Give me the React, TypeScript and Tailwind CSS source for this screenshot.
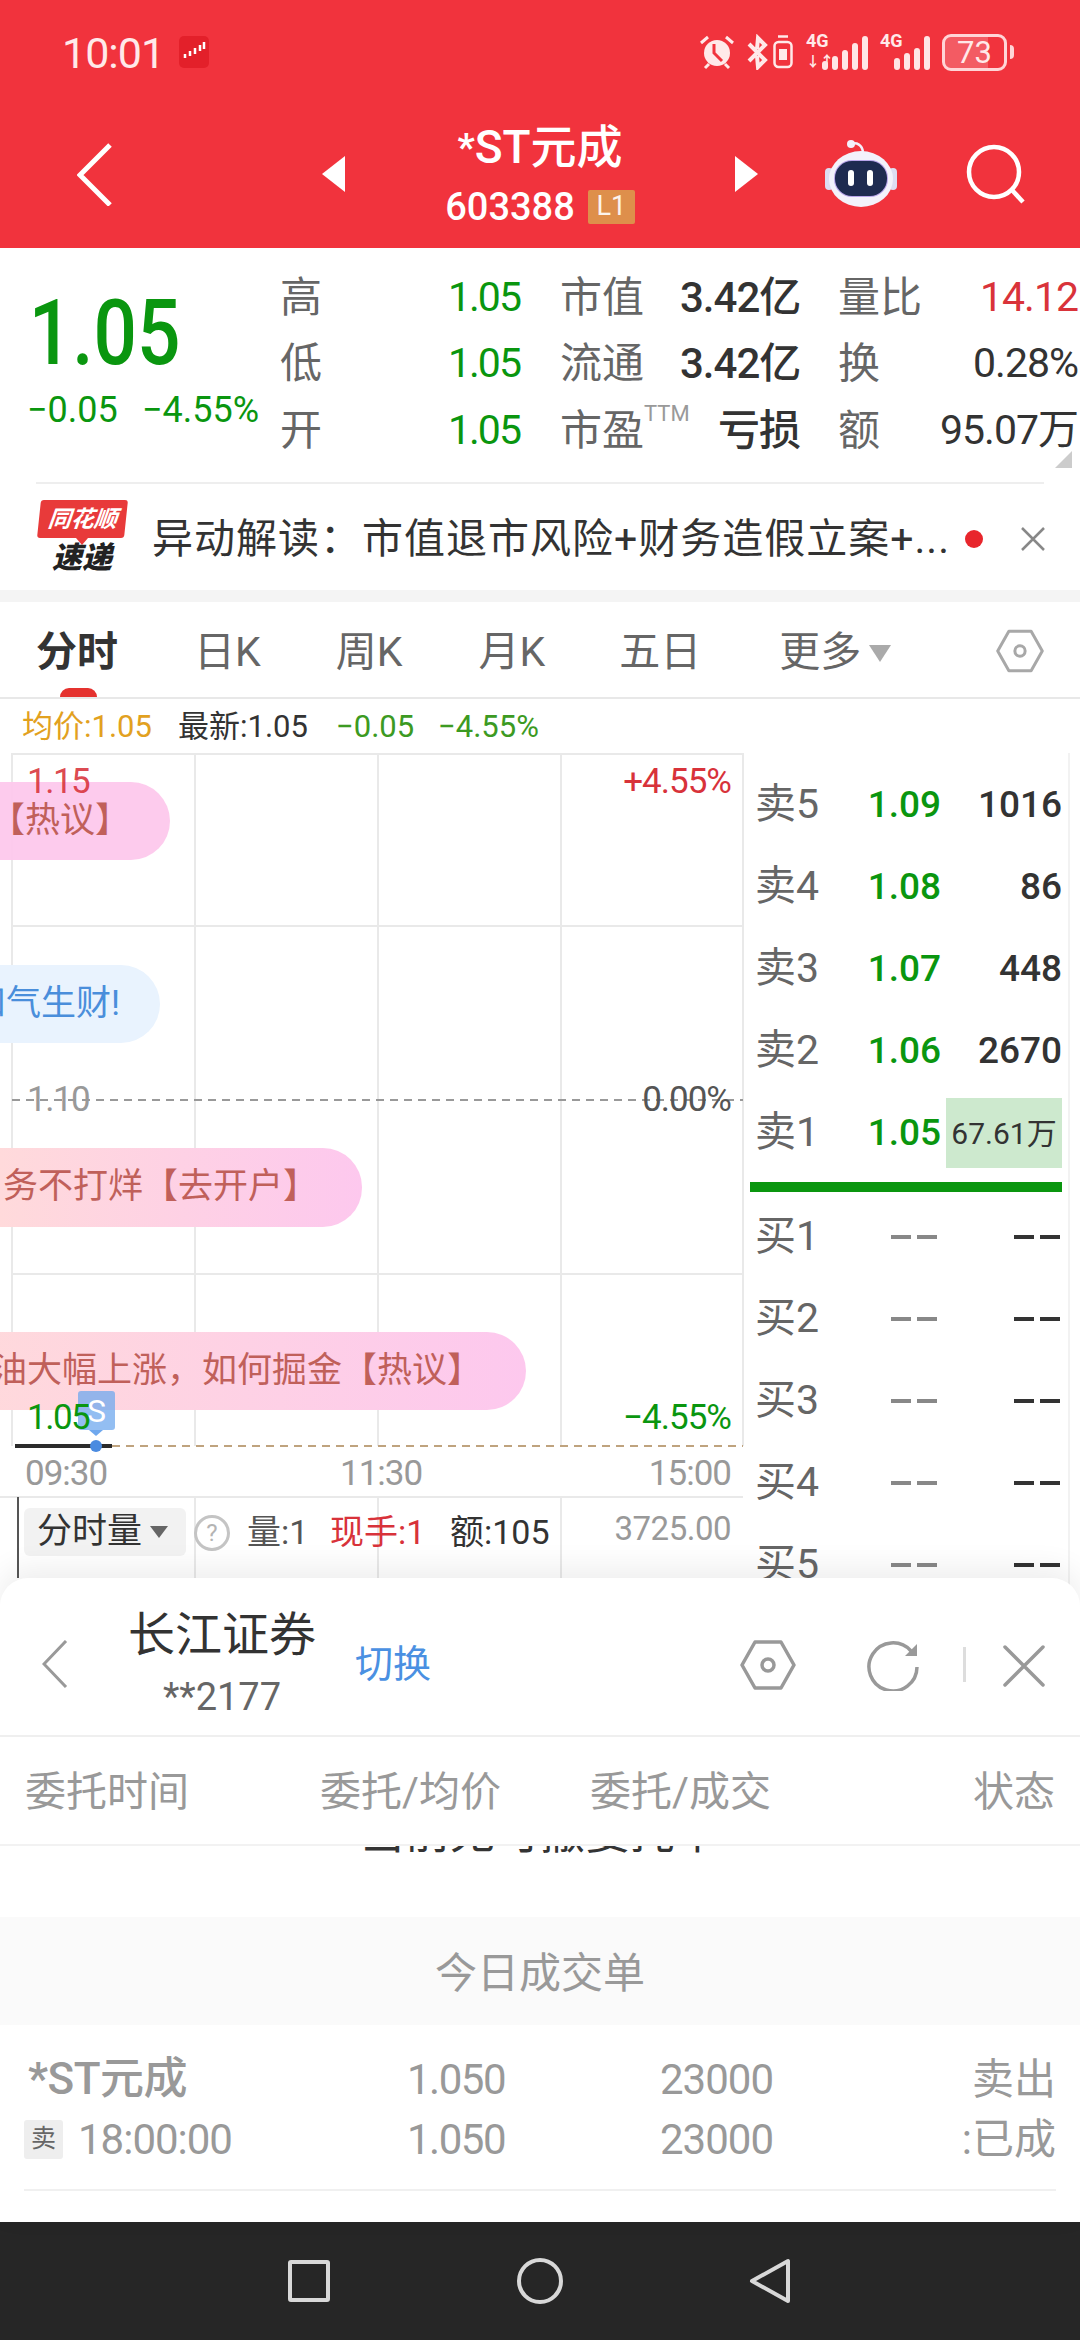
import React from 'react';

const FONT = 'Roboto, "Noto Sans CJK SC", sans-serif';

const quoteRows = [
  { a: '高', b: '1.05', c: '市值', d: '3.42亿', e: '量比', f: '14.12', red: true },
  { a: '低', b: '1.05', c: '流通', d: '3.42亿', e: '换', f: '0.28%' },
  { a: '开', b: '1.05', c: '市盈', d: '亏损', e: '额', f: '95.07万', ttm: true },
];

const sells = [
  { label: '卖5', price: '1.09', qty: '1016' },
  { label: '卖4', price: '1.08', qty: '86' },
  { label: '卖3', price: '1.07', qty: '448' },
  { label: '卖2', price: '1.06', qty: '2670' },
];

const buys = ['买1', '买2', '买3', '买4', '买5'];

function Bars({ heights }: { heights: number[] }) {
  return (
    <div className="flex items-end gap-[4px] h-[34px]">
      {heights.map((h, i) => (
        <div key={i} className="w-[6px] rounded-[3px] bg-[#FFE6E6]" style={{ height: h }} />
      ))}
    </div>
  );
}

function HexIcon({ width, height, color, stroke }: { width: number; height: number; color: string; stroke: number }) {
  return (
    <svg width={width} height={height} viewBox="0 0 56 50" fill="none" stroke={color} strokeWidth={stroke}>
      <path d="M15 2h26l13 23-13 23H15L2 25z" strokeLinejoin="round" />
      <circle cx="28" cy="25" r="6" />
    </svg>
  );
}

function StatusBar() {
  return (
    <div className="h-[100px] flex items-start pt-[32px] pl-[62px] text-[#FFE9E9]">
      <span className="text-[43px] leading-[42px] w-[100px] tracking-[-1px]">10:01</span>
      {/* app thumbnail */}
      <svg width="30" height="32" viewBox="0 0 30 32" className="ml-[17px] mt-[4px]">
        <rect width="30" height="32" rx="5" fill="#E3202A" />
        <path d="M6 22v-4M11 20v-5M16 18v-6M21 15v-6M25 13V6" stroke="#fff" strokeWidth="2.5" />
      </svg>
      <div className="ml-[490px] flex items-center h-[40px]">
        {/* alarm */}
        <svg width="36" height="36" viewBox="0 0 36 36" fill="#FFE9E9">
          <circle cx="18" cy="19" r="13" />
          <path d="M2 9l7-6M34 9l-7-6M6 34l4-4M30 34l-4-4" stroke="#FFE9E9" strokeWidth="3" />
          <path d="M15 10v9l8 8" stroke="#F1333D" strokeWidth="3" fill="none" />
        </svg>
        {/* bluetooth vibrate */}
        <svg width="21" height="36" viewBox="0 0 21 36" fill="none" stroke="#FFE9E9" strokeWidth="4" className="ml-[12px]">
          <path d="M2 10l16 16-7 7-1-11M2 27L18 11l-7-7-1 11" />
        </svg>
        <svg width="20" height="34" viewBox="0 0 20 34" className="ml-[5px]">
          <path d="M5 1.5h10" stroke="#FFE9E9" strokeWidth="2.5" />
          <rect x="1.5" y="7" width="17" height="25" rx="4" fill="none" stroke="#FFE9E9" strokeWidth="2.5" />
          <rect x="6" y="14" width="8" height="11" fill="#FFE9E9" />
        </svg>
        <div className="relative ml-[13px] w-[62px] h-[36px]">
          <span className="absolute left-0 -top-[2px] text-[18px] leading-[18px] font-bold">4G</span>
          <span className="absolute left-[0px] top-[20px] text-[14px] leading-[14px] font-bold">↓↑</span>
          <div className="absolute right-0 bottom-0">
            <Bars heights={[9, 14, 20, 27, 34]} />
          </div>
        </div>
        <div className="relative ml-[12px] w-[50px] h-[36px]">
          <span className="absolute left-0 -top-[2px] text-[18px] leading-[18px] font-bold">4G</span>
          <div className="absolute right-0 bottom-0">
            <Bars heights={[12, 17, 22, 34]} />
          </div>
        </div>
        <div className="relative ml-[12px] w-[65px] h-[37px] rounded-[9px] border-[3px] border-[#FFD5D7] overflow-hidden flex items-center justify-center text-[31px] leading-none">
          <div className="absolute left-0 top-0 bottom-0 w-[73%] bg-white/20" />
          <span className="relative">73</span>
        </div>
        <div className="ml-[3px] w-[4px] h-[14px] rounded-r bg-[#FFD5D7]" />
      </div>
    </div>
  );
}

function Header() {
  return (
    <div className="h-[148px] flex items-center text-white">
      <svg width="35" height="63" viewBox="0 0 35 63" fill="none" stroke="#fff" strokeWidth="5" className="ml-[77px]">
        <path d="M33 2L3 32l30 30" />
      </svg>
      <div className="ml-[210px] w-0 h-0 border-y-[18px] border-y-transparent border-r-[23px] border-r-white" />
      <div className="w-[390px] flex flex-col items-center">
        <div className="text-[46px] leading-[50px] font-medium -mt-[2px]">
          <span className="text-[38px] align-[2px] font-bold">*</span>ST元成
        </div>
        <div className="mt-[16px] flex items-center h-[36px]">
          <span className="text-[38px] leading-[36px] font-medium">603388</span>
          <span className="ml-[13px] w-[47px] h-[34px] rounded-[2px] bg-[#DE8F4B] flex items-center justify-center text-[27px] text-white/90">
            L1
          </span>
        </div>
      </div>
      <div className="w-0 h-0 border-y-[18px] border-y-transparent border-l-[23px] border-l-white" />
      {/* robot */}
      <svg width="72" height="68" viewBox="0 0 72 68" className="ml-[67px]">
        <path d="M26 4c6-2 11 1 12 8" stroke="#F4F0FB" strokeWidth="2.5" fill="none" />
        <circle cx="26" cy="4" r="4" fill="#F4F0FB" />
        <rect x="0" y="28" width="8" height="22" rx="4" fill="#DDDDF2" />
        <rect x="64" y="28" width="8" height="22" rx="4" fill="#DDDDF2" />
        <ellipse cx="36" cy="39" rx="32" ry="28" fill="#F3F2FB" />
        <rect x="9" y="20" width="54" height="37" rx="18" fill="#B9A5EA" />
        <rect x="10" y="21" width="52" height="35" rx="17" fill="#1E2B50" />
        <rect x="23" y="30" width="6" height="16" rx="3" fill="#fff" />
        <rect x="42" y="30" width="6" height="16" rx="3" fill="#fff" />
      </svg>
      <svg width="60" height="60" viewBox="0 0 60 60" fill="none" stroke="#fff" strokeWidth="4.5" className="ml-[69px]">
        <circle cx="28" cy="28" r="25" />
        <path d="M46 46l11 12" />
      </svg>
    </div>
  );
}

function Quote() {
  return (
    <div className="relative h-[234px] flex bg-white">
      <div className="w-[280px] shrink-0 pl-[27px]">
        <div className="mt-[41px] text-[90px] leading-[90px] font-medium text-[#0A960F] pl-[2px] origin-left scale-x-[0.85]">1.05</div>
        <div className="mt-[11px] flex text-[36px] leading-[40px] text-[#0A960F]">
          <span className="w-[115px]">−0.05</span>
          <span>−4.55%</span>
        </div>
      </div>
      <div className="flex-1 pt-[16px] pr-[2px]">
        {quoteRows.map((r) => (
          <div key={r.a} className="h-[66.5px] flex items-center">
            <span className="w-[168px] text-[42px] text-[#666]">{r.a}</span>
            <span className="w-[112px] text-[41px] text-[#0A960F] tracking-[-2px]">{r.b}</span>
            <span className="w-[120px] text-[42px] text-[#666] flex items-start whitespace-nowrap">
              {r.c}
              {r.ttm && <span className="text-[22px] leading-[30px] text-[#999]">TTM</span>}
            </span>
            <span className="w-[120px] text-right text-[42px] text-[#333] whitespace-nowrap tracking-[-1px] font-medium">{r.d}</span>
            <div className="flex-1 pl-[38px] flex justify-between items-center">
              <span className="text-[42px] text-[#666]">{r.e}</span>
              <span className={`text-[41px] tracking-[-1px] ${r.red ? 'text-[#D9333A]' : 'text-[#333]'}`}>{r.f}</span>
            </div>
          </div>
        ))}
      </div>
      <div className="absolute right-[8px] bottom-[14px] w-0 h-0 border-b-[17px] border-b-[#CCCCCC] border-l-[17px] border-l-transparent" />
    </div>
  );
}

function News() {
  return (
    <div className="h-[108px] mx-[36px] border-t-2 border-[#EEEEEE] flex items-start pt-[16px]">
      <div className="w-[88px] ml-[2px] flex flex-col items-center shrink-0">
        <div className="w-[87px] h-[38px] bg-[#E83A3A] rounded-[3px] -skew-x-6 flex items-center justify-center text-[23px] leading-none italic font-bold text-white whitespace-nowrap">
          同花顺
        </div>
        <div className="w-0 h-0 border-x-[6px] border-x-transparent border-t-[7px] border-t-[#E83A3A]" />
        <div className="text-[30px] leading-[30px] italic font-black text-[#222] -mt-[2px]">速递</div>
      </div>
      <div className="ml-[26px] w-[813px] shrink-0 mt-[14px] text-[41px] leading-[50px] text-[#333] tracking-[1px] whitespace-nowrap overflow-hidden">
        {'异动解读\uFF1A市值退市风险+财务造假立案+...'}
      </div>
      <div className="mt-[30px] w-[18px] h-[18px] rounded-full bg-[#E8262C] shrink-0" />
      <svg width="26" height="26" viewBox="0 0 26 26" stroke="#888" strokeWidth="2.5" className="ml-[37px] mt-[26px] shrink-0">
        <path d="M2 2l22 22M24 2L2 24" />
      </svg>
    </div>
  );
}

function Tabs() {
  return (
    <div className="relative h-[97px] border-b-2 border-[#E8E8E8] bg-white flex items-center pt-[6px] text-[41px] text-[#666]">
      <div className="absolute left-[60px] bottom-0 w-[37px] h-[9px] rounded-t-full rounded-b-[2px] bg-[#E5322F]" />
      <span className="ml-[36px] font-bold text-[#333]">分时</span>
      <span className="ml-[76px]">日K</span>
      <span className="ml-[75px]">周K</span>
      <span className="ml-[76px]">月K</span>
      <span className="ml-[74px]">五日</span>
      <span className="ml-[78px]">更多</span>
      <div className="ml-[8px] mt-[2px] w-0 h-0 border-x-[11px] border-x-transparent border-t-[17px] border-t-[#AAAAAA]" />
      <div className="absolute left-[996px] top-[26px]">
        <HexIcon width={48} height={46} color="#A8A8A8" stroke={3.5} />
      </div>
    </div>
  );
}

function Legend() {
  return (
    <div className="h-[54px] flex items-center pl-[22px] pt-[2px] text-[31px] whitespace-nowrap bg-white">
      <span className="text-[#E2A11F] w-[156px]">均价:1.05</span>
      <span className="text-[#333] w-[158px]">最新:1.05</span>
      <span className="text-[#3C9A22] w-[102px]">−0.05</span>
      <span className="text-[#3C9A22]">−4.55%</span>
    </div>
  );
}

function Chart() {
  return (
    <div className="relative w-[745px] h-[849px] shrink-0 overflow-hidden">
      {/* chart grid */}
      <svg width="745" height="849" className="absolute left-0 top-0" fill="none">
        <g stroke="#E9E9E9" strokeWidth="2">
          <path d="M12 1H743M12 173H743M12 521H743M0 744H743" />
          <path d="M12 0V693M195 0V693M378 0V693M561 0V693M743 0V693" />
          <path d="M195 744V849M378 744V849M561 744V849" />
        </g>
        <path d="M12 347H743" stroke="#999" strokeWidth="2" strokeDasharray="8 6" />
        <path d="M112 693H743" stroke="#BFA37E" strokeWidth="2" strokeDasharray="8 6" />
        <path d="M15 693H112" stroke="#2B2B2B" strokeWidth="4" />
        <path d="M18 744V825" stroke="#555" strokeWidth="2" />
      </svg>

      <div className="absolute -left-[40px] top-[29px] w-[210px] h-[78px] rounded-r-[39px] bg-[#FDC8EC]/95 flex items-center justify-end pr-[40px] text-[35px] text-[#C0605A] whitespace-nowrap">
        【热议】
      </div>
      <div className="absolute -left-[40px] top-[212px] w-[200px] h-[78px] rounded-r-[39px] bg-[#E9F3FE] flex items-center justify-end pr-[40px] text-[35px] text-[#4A8EDB] whitespace-nowrap">
        和气生财!
      </div>
      <div className="absolute left-0 top-[395px] w-[362px] h-[79px] rounded-r-[39px] bg-linear-to-r from-[#FFDADB] to-[#FDC8EE] flex items-center justify-end pr-[44px] text-[35px] text-[#C0605A] whitespace-nowrap">
        务不打烊【去开户】
      </div>
      <div className="absolute -left-[40px] top-[579px] w-[566px] h-[78px] rounded-r-[39px] bg-linear-to-r from-[#FFDADB] to-[#FDC8EE] flex items-center justify-end pr-[44px] text-[35px] text-[#C0605A] whitespace-nowrap">
        {'石油大幅上涨\uFF0C如何掘金【热议】'}
      </div>

      {/* S marker */}
      <div className="absolute left-[78px] top-[638px] w-[37px] h-[39px] rounded-[3px] bg-[#6FA8EE]/75 flex items-center justify-center text-[32px] leading-none text-white">
        S
      </div>
      <div className="absolute left-[89px] top-[677px] w-0 h-0 border-x-[7px] border-x-transparent border-t-[6px] border-t-[#6FA8EE]" />
      <div className="absolute left-[90px] top-[687px] w-[12px] h-[12px] rounded-full bg-[#4A8BE0]" />

      <span className="absolute left-[27px] top-[11px] text-[35px] leading-[36px] tracking-[-1.5px] text-[#D8323A]/90">1.15</span>
      <span className="absolute right-[14px] top-[11px] text-[35px] leading-[36px] tracking-[-1px] text-[#D8323A]">+4.55%</span>
      <span className="absolute left-[27px] top-[329px] text-[35px] leading-[36px] tracking-[-1.5px] text-[#999]">1.10</span>
      <span className="absolute right-[14px] top-[329px] text-[35px] leading-[36px] tracking-[-1px] text-[#555]">0.00%</span>
      <span className="absolute left-[27px] top-[647px] text-[35px] leading-[36px] tracking-[-1.5px] text-[#0A960F]">1.05</span>
      <span className="absolute right-[14px] top-[647px] text-[35px] leading-[36px] tracking-[-1px] text-[#0A960F]">−4.55%</span>

      <span className="absolute left-[25px] top-[701px] text-[35px] leading-[40px] tracking-[-1px] text-[#999]">09:30</span>
      <span className="absolute left-[340px] top-[701px] text-[35px] leading-[40px] tracking-[-1px] text-[#999]">11:30</span>
      <span className="absolute right-[14px] top-[701px] text-[35px] leading-[40px] tracking-[-1px] text-[#999]">15:00</span>

      {/* volume header */}
      <div className="absolute left-[24px] top-[755px] w-[162px] h-[48px] rounded-[6px] bg-[#F2F2F2] flex items-center pl-[13px] text-[35px] text-[#333] whitespace-nowrap">
        分时量
        <div className="ml-[8px] w-0 h-0 border-x-[9px] border-x-transparent border-t-[12px] border-t-[#666]" />
      </div>
      <div className="absolute left-[194px] top-[762px] w-[36px] h-[36px] rounded-full border-[3px] border-[#C4C4C4] flex items-center justify-center text-[24px] leading-none text-[#B4B4B4]">
        ?
      </div>
      <div className="absolute left-[247px] top-[755px] h-[48px] flex items-center text-[34px] whitespace-nowrap">
        <span className="w-[83px] text-[#555]">量:1</span>
        <span className="w-[120px] text-[#D8323A]">现手:1</span>
        <span className="text-[#333]">额:105</span>
      </div>
      <span className="absolute right-[14px] top-[756px] text-[33px] leading-[40px] tracking-[-0.5px] text-[#999]">3725.00</span>
    </div>
  );
}

function OrderBook() {
  return (
    <div className="flex-1 h-[849px] overflow-hidden pt-[11px] pl-[5px] pr-[6px] mr-[10px] border-r-2 border-[#F2F2F2]">
      {sells.map((s) => (
        <div key={s.label} className="h-[82px] flex items-center pl-[5px]">
          <span className="w-[72px] text-[41px] text-[#666]">{s.label}</span>
          <span className="w-[114px] text-right text-[37px] font-medium text-[#0A960F]">{s.price}</span>
          <span className="flex-1 text-right text-[37px] font-medium text-[#333]">{s.qty}</span>
        </div>
      ))}
      <div className="h-[82px] flex items-center pl-[5px]">
        <span className="w-[72px] text-[41px] text-[#666]">卖1</span>
        <span className="w-[114px] text-right text-[37px] font-medium text-[#0A960F]">1.05</span>
        <span className="ml-[5px] flex-1 h-[70px] bg-[#CDE9CE] flex items-center justify-center text-[30px] text-[#333] whitespace-nowrap">
          67.61万
        </span>
      </div>
      <div className="mt-[8px] h-[10px] bg-[#0A960F]" />
      <div className="pt-[4px]">
        {buys.map((b) => (
          <div key={b} className="h-[82px] flex items-center pl-[5px] pr-[2px]">
            <span className="w-[72px] text-[41px] text-[#666]">{b}</span>
            <span className="w-[114px] flex justify-end gap-[6px] pr-[4px]">
              <span className="w-[20px] h-[4px] bg-[#888]" />
              <span className="w-[20px] h-[4px] bg-[#888]" />
            </span>
            <span className="flex-1 flex justify-end gap-[6px]">
              <span className="w-[20px] h-[4px] bg-[#333]" />
              <span className="w-[20px] h-[4px] bg-[#333]" />
            </span>
          </div>
        ))}
      </div>
    </div>
  );
}

function OrdersSheet() {
  return (
    <div className="relative -mt-[24px] flex-1 bg-white rounded-t-[28px] shadow-[0_-10px_30px_rgba(0,0,0,0.07)] flex flex-col">
      <div className="h-[159px] border-b-2 border-[#EFEFEF] flex items-center">
        <svg width="26" height="48" viewBox="0 0 26 48" fill="none" stroke="#999" strokeWidth="3" className="ml-[42px] mt-[14px]">
          <path d="M24 1L2 24l22 23" />
        </svg>
        <div className="ml-[59px] w-[190px] flex flex-col items-center mt-[10px]">
          <span className="text-[47px] leading-[56px] text-[#333] whitespace-nowrap">长江证券</span>
          <span className="mt-[14px] text-[38px] leading-[40px] text-[#666]">**2177</span>
        </div>
        <span className="ml-[38px] mt-[14px] text-[38px] leading-[50px] text-[#4A90E2]">切换</span>
        <div className="absolute left-[740px] top-[62px]">
          <HexIcon width={56} height={50} color="#999" stroke={3.5} />
        </div>
        <svg width="52" height="52" viewBox="0 0 52 52" fill="none" stroke="#999" strokeWidth="3.5" className="absolute left-[867px] top-[61px]">
          <path d="M44 12A24 24 0 1 0 50 28" />
          <path d="M50 5v12H38z" fill="#999" stroke="none" />
        </svg>
        <div className="absolute left-[963px] top-[69px] w-[3px] h-[35px] bg-[#DDDDDD]" />
        <svg width="42" height="42" viewBox="0 0 42 42" stroke="#999" strokeWidth="3.5" strokeLinecap="round" className="absolute left-[1003px] top-[67px]">
          <path d="M2 2l38 38M40 2L2 40" />
        </svg>
      </div>
      <div className="h-[109px] border-b-2 border-[#F2F2F2] flex items-center pt-[4px] text-[41px] text-[#999] whitespace-nowrap">
        <span className="ml-[25px] w-[295px]">委托时间</span>
        <span className="w-[270px]">委托/均价</span>
        <span className="w-[383px]">委托/成交</span>
        <span>状态</span>
      </div>
      {/* list scrolled under the header: only the bottom of the line shows */}
      <div className="h-[71px] overflow-hidden text-center">
        <div className="-mt-[35px] text-[45px] leading-[45px] text-[#333]">当前无可撤委托单</div>
      </div>
      <div className="h-[108px] bg-[#FAFAFA] flex items-center justify-center pt-[4px] text-[42px] text-[#999]">今日成交单</div>
      <div className="mx-[24px] h-[166px] border-b-2 border-[#F0F0F0] pt-[24px] text-[42px] text-[#999] whitespace-nowrap">
        <div className="h-[60px] flex items-center">
          <span className="w-[383px] pl-[4px] text-[44px] tracking-[-0.5px] font-medium"><span className="font-bold">*</span>ST元成</span>
          <span className="w-[96px] text-right tracking-[-1.5px]">1.050</span>
          <span className="w-[270px] text-right tracking-[-1px]">23000</span>
          <span className="flex-1 text-right">卖出</span>
        </div>
        <div className="h-[60px] flex items-center">
          <span className="w-[383px] flex items-center">
            <span className="w-[39px] h-[39px] rounded-[3px] bg-[#EEEEEE] flex items-center justify-center text-[25px] text-[#666]">卖</span>
            <span className="ml-[15px] tracking-[-1px]">18:00:00</span>
          </span>
          <span className="w-[96px] text-right tracking-[-1.5px]">1.050</span>
          <span className="w-[270px] text-right tracking-[-1px]">23000</span>
          <span className="flex-1 text-right">:已成</span>
        </div>
      </div>
    </div>
  );
}

function NavBar() {
  return (
    <div className="h-[118px] bg-[#262626] flex items-center">
      <div className="ml-[288px] w-[42px] h-[42px] rounded-[3px] border-[4px] border-[#D8D8D8]" />
      <div className="ml-[187px] w-[46px] h-[46px] rounded-full border-[4px] border-[#D8D8D8]" />
      <svg width="42" height="46" viewBox="0 0 42 46" fill="none" stroke="#D8D8D8" strokeWidth="4" strokeLinejoin="round" className="ml-[186px]">
        <path d="M39 3v40L3 23z" />
      </svg>
    </div>
  );
}

export default function App() {
  return (
    <div className="w-[1080px] h-[2340px] bg-white flex flex-col overflow-hidden" style={{ fontFamily: FONT }}>
      <div className="bg-[#F1333D]">
        <StatusBar />
        <Header />
      </div>
      <Quote />
      <News />
      <div className="h-[12px] bg-[#F4F4F4]" />
      <Tabs />
      <Legend />
      <div className="flex items-start">
        <Chart />
        <OrderBook />
      </div>
      <OrdersSheet />
      <NavBar />
    </div>
  );
}
